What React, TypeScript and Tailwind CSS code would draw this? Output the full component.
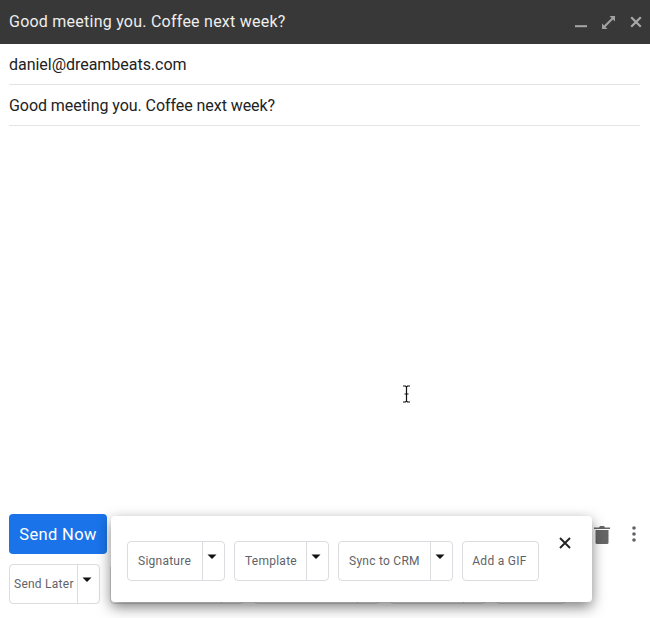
const font = "font-['Roboto',sans-serif]";

function Caret() {
  return (
    <svg width="10" height="6" viewBox="0 0 10 6" className="block">
      <path d="M0.5 0.5H9.5L5 5Z" fill="#111" />
    </svg>
  );
}

function Split({ label, w, pad = "pl-[10px]" }: { label: string; w: string; pad?: string }) {
  return (
    <div className={`flex h-10 items-stretch rounded-[4px] border border-[#dadce0] bg-white ${w}`}>
      <div className={`flex flex-1 items-center text-[12px] tracking-[0.25px] text-[#5f6368] ${pad}`}>{label}</div>
      <div className="flex w-[22px] justify-center border-l border-[#dadce0] pr-[3px] pt-[12px]">
        <Caret />
      </div>
    </div>
  );
}

export default function App() {
  return (
    <div className={`flex h-[618px] w-[650px] flex-col overflow-hidden bg-white ${font}`}>
      <header className="flex h-11 shrink-0 items-center justify-between bg-[#383838] pl-[9px] pr-[8px]">
        <span className="text-[16px] tracking-[0.24px] text-[#eeeeee]">Good meeting you. Coffee next week?</span>
        <div className="flex items-center gap-[15px]">
          <svg width="12" height="12" viewBox="0 0 12 12"><path d="M0 10.2H12" stroke="#a8a8a8" strokeWidth="2" /></svg>
          <svg width="13" height="13" viewBox="0 0 13 13" fill="#a0a0a0">
            <path d="M7.5 0H13V5.5L11 3.5L3.5 11L5.5 13H0V7.5L2 9.5L9.5 2Z" />
          </svg>
          <svg width="12" height="12" viewBox="0 0 12 12"><path d="M1.2 1.2L10.8 10.8M10.8 1.2L1.2 10.8" stroke="#a8a8a8" strokeWidth="2.2" /></svg>
        </div>
      </header>

      <div className="ml-[9px] mr-[10px] flex h-[41px] shrink-0 items-center border-b border-[#e4e4e4] pt-[2px] text-[16px] tracking-[-0.03px] text-[#222222]">daniel@dreambeats.com</div>
      <div className="ml-[9px] mr-[10px] flex h-[41px] shrink-0 items-center border-b border-[#e4e4e4] pt-[2px] text-[16px] tracking-[-0.06px] text-[#222222]">Good meeting you. Coffee next week?</div>

      <div className="relative flex-1">
        <svg width="9" height="18" viewBox="0 0 9 18" className="absolute left-[402px] top-[259px]">
          <path d="M1 1H3.5L4.5 2L5.5 1H8M4.5 2V16M1 17H3.5L4.5 16L5.5 17H8M2.5 9H6.5" fill="none" stroke="#111" strokeWidth="1.2" />
        </svg>
      </div>

      <footer className="relative h-[104px] shrink-0 px-[9px]">
        <button className="flex h-10 w-[98px] items-center justify-center rounded-[4px] bg-[#1a73e8] pt-[2px] text-[16.5px] tracking-[0.35px] text-white">Send Now</button>
        <div className="mt-[10px] flex gap-[10px]">
          <Split label="Send Later" w="w-[91px]" pad="pl-[4px]" />
          <Split label="Schedule" w="w-[134px]" />
          <Split label="Insert Template" w="w-[126px]" />
          <Split label="Follow up" w="w-[96px]" />
          <div className="h-10 w-[70px] rounded-[4px] border border-[#dadce0]" />
        </div>

        <svg width="18" height="20" viewBox="0 0 18 20" className="absolute left-[593px] top-[10px]" fill="#666666">
          <path d="M1 3.5H6L7 2H11L12 3.5H17V5H1Z" />
          <path d="M2.5 6H15.5V18.5Q15.5 20 14 20H4Q2.5 20 2.5 18.5Z" />
        </svg>
        <svg width="4" height="16" viewBox="0 0 4 16" className="absolute left-[632px] top-[12px]" fill="#5f6368">
          <circle cx="2" cy="2" r="1.8" /><circle cx="2" cy="8" r="1.8" /><circle cx="2" cy="14" r="1.8" />
        </svg>

        <div className="absolute left-[111px] top-[2px] flex h-[86px] w-[481px] gap-[9px] rounded-[4px] bg-white pl-[16px] pt-[25px] shadow-[0_5px_14px_rgba(0,0,0,0.5)]">
          <Split label="Signature" w="w-[98px]" />
          <Split label="Template" w="w-[95px]" />
          <Split label="Sync to CRM" w="w-[115px]" />
          <div className="flex h-10 w-[77px] items-center justify-center rounded-[4px] border border-[#dadce0] pr-[2px] text-[12px] tracking-[0.3px] text-[#5f6368]">Add a GIF</div>
          <svg width="12" height="12" viewBox="0 0 12 12" className="absolute left-[448px] top-[21px]">
            <path d="M1 1L11 11M11 1L1 11" stroke="#222" strokeWidth="1.9" />
          </svg>
        </div>
      </footer>
    </div>
  );
}
